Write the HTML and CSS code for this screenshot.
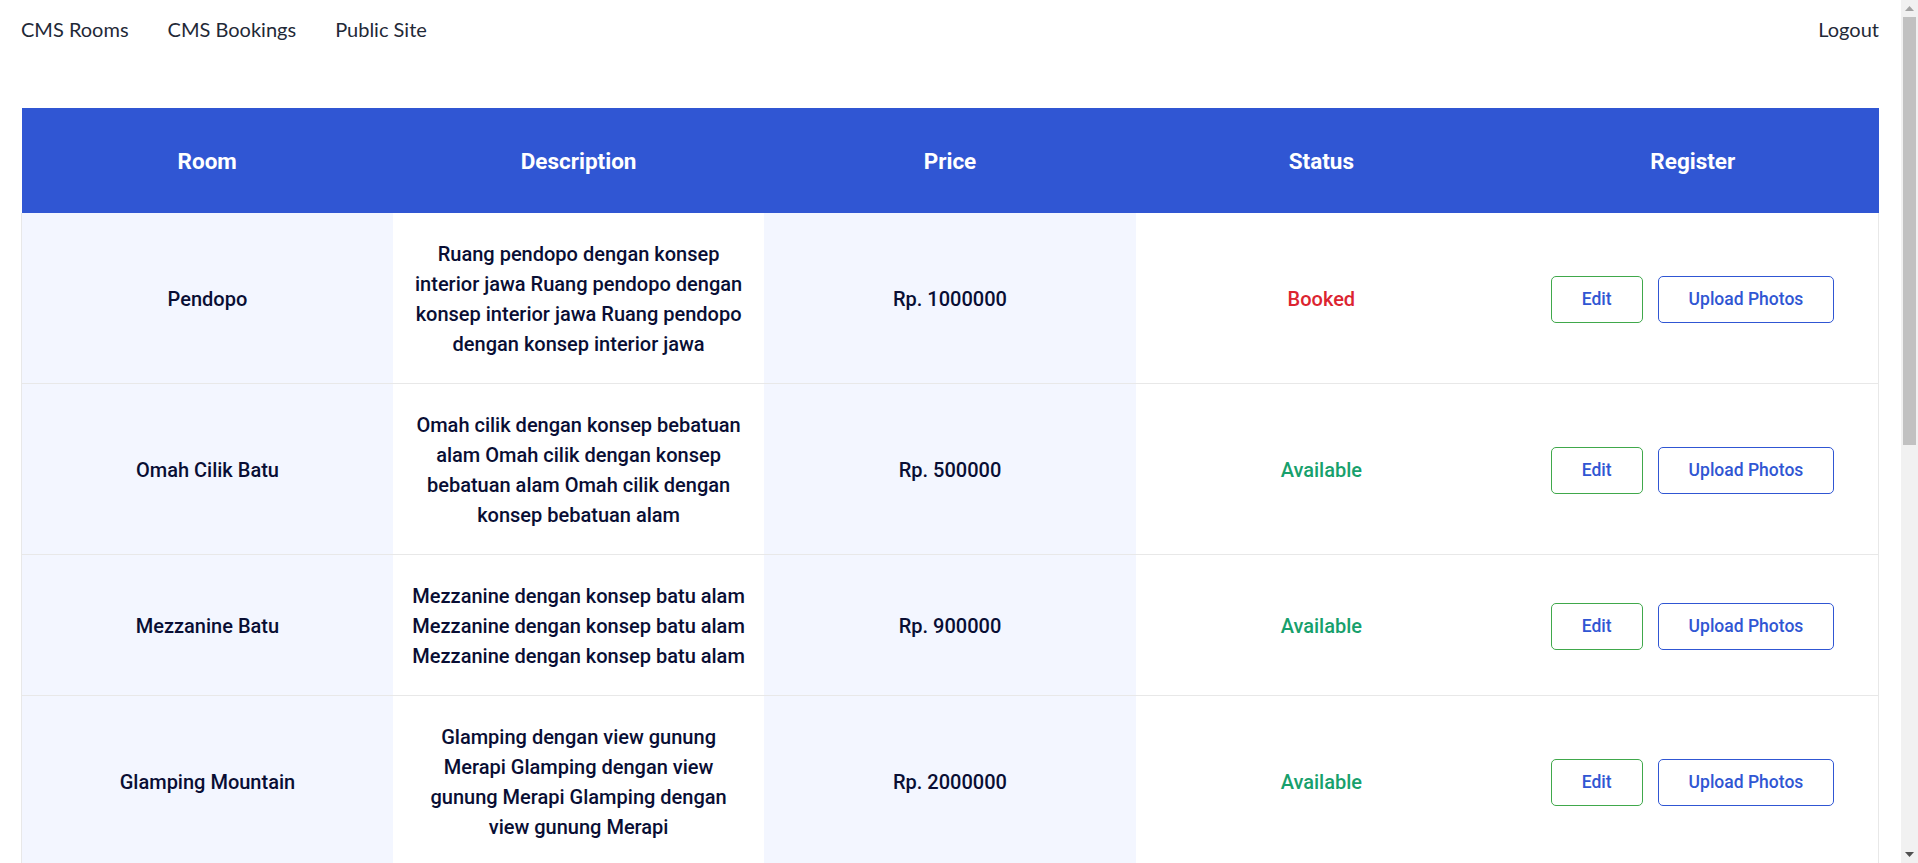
FILE: index.html
```html
<!DOCTYPE html>
<html lang="id">
<head>
<meta charset="utf-8">
<title>CMS Rooms</title>
<link rel="stylesheet" href="styles.css">
</head>
<body>
<nav class="topnav">
  <div class="nav-links">
    <a class="nav-link" href="#">CMS Rooms</a>
    <a class="nav-link" href="#">CMS Bookings</a>
    <a class="nav-link" href="#">Public Site</a>
  </div>
  <a class="nav-link" href="#">Logout</a>
</nav>
<main class="page">
  <table class="rooms">
    <colgroup><col><col><col><col><col></colgroup>
    <thead>
      <tr>
        <th>Room</th>
        <th>Description</th>
        <th>Price</th>
        <th>Status</th>
        <th>Register</th>
      </tr>
    </thead>
    <tbody>
      <tr>
        <td class="tint">Pendopo</td>
        <td>Ruang pendopo dengan konsep<br>interior jawa Ruang pendopo dengan<br>konsep interior jawa Ruang pendopo<br>dengan konsep interior jawa</td>
        <td class="tint">Rp. 1000000</td>
        <td><span class="status booked">Booked</span></td>
        <td class="last"><div class="actions"><a class="btn btn-edit" href="#">Edit</a><a class="btn btn-upload" href="#">Upload Photos</a></div></td>
      </tr>
      <tr>
        <td class="tint">Omah Cilik Batu</td>
        <td>Omah cilik dengan konsep bebatuan<br>alam Omah cilik dengan konsep<br>bebatuan alam Omah cilik dengan<br>konsep bebatuan alam</td>
        <td class="tint">Rp. 500000</td>
        <td><span class="status available">Available</span></td>
        <td class="last"><div class="actions"><a class="btn btn-edit" href="#">Edit</a><a class="btn btn-upload" href="#">Upload Photos</a></div></td>
      </tr>
      <tr>
        <td class="tint">Mezzanine Batu</td>
        <td>Mezzanine dengan konsep batu alam<br>Mezzanine dengan konsep batu alam<br>Mezzanine dengan konsep batu alam</td>
        <td class="tint">Rp. 900000</td>
        <td><span class="status available">Available</span></td>
        <td class="last"><div class="actions"><a class="btn btn-edit" href="#">Edit</a><a class="btn btn-upload" href="#">Upload Photos</a></div></td>
      </tr>
      <tr>
        <td class="tint">Glamping Mountain</td>
        <td>Glamping dengan view gunung<br>Merapi Glamping dengan view<br>gunung Merapi Glamping dengan<br>view gunung Merapi</td>
        <td class="tint">Rp. 2000000</td>
        <td><span class="status available">Available</span></td>
        <td class="last"><div class="actions"><a class="btn btn-edit" href="#">Edit</a><a class="btn btn-upload" href="#">Upload Photos</a></div></td>
      </tr>
    </tbody>
  </table>
</main>
<div class="scrollbar" aria-hidden="true">
  <div class="sb-btn">
    <svg width="9" height="5" viewBox="0 0 9 5"><polygon points="0,5 9,5 4.5,0" fill="#a3a3a3"/></svg>
  </div>
  <div class="sb-track"><div class="sb-thumb"></div></div>
  <div class="sb-btn">
    <svg width="9" height="5" viewBox="0 0 9 5"><polygon points="0,0 9,0 4.5,5" fill="#505050"/></svg>
  </div>
</div>
</body>
</html>
```
FILE: styles.css
```css
html {
  background: #ffffff;
}
body {
  margin: 0 17px 0 0;
  font-family: "Lato", "Liberation Sans", sans-serif;
  color: #090e34;
  background: #ffffff;
}

.topnav {
  display: flex;
  justify-content: space-between;
  align-items: center;
  height: 58px;
  padding: 0 22px 0 21px;
}
.nav-links {
  display: flex;
  gap: 39px;
}
.nav-link {
  font-size: 20px;
  line-height: 30px;
  color: #1f2937;
  text-decoration: none;
}

.page {
  padding: 50px 22px 0 21px;
}
.rooms {
  width: 100%;
  table-layout: fixed;
  border-collapse: collapse;
  font-family: "Roboto", "Lato", sans-serif;
}
.rooms col {
  width: 20%;
}
.rooms th {
  background: #3056d3;
  color: #ffffff;
  font-size: 22.5px;
  line-height: 35px;
  font-weight: 700;
  padding: 36px 15px 34px;
  text-align: center;
}
.rooms td {
  font-size: 20px;
  line-height: 30px;
  font-weight: 500;
  color: #090e34;
  text-align: center;
  padding: 26px 10px 24px;
  border-bottom: 1px solid #e8e8e8;
  white-space: nowrap;
}
.rooms td:first-child {
  border-left: 1px solid #e8e8e8;
}
.rooms td.last {
  border-right: 1px solid #e8e8e8;
}
.rooms td.tint {
  background: #f3f6ff;
}
.status.booked {
  color: #dc2430;
}
.status.available {
  color: #17a06c;
}
.actions {
  display: flex;
  justify-content: center;
  gap: 15px;
}
.btn {
  display: inline-block;
  font-size: 17.5px;
  line-height: 25px;
  font-weight: 500;
  color: #3056d3;
  text-decoration: none;
  padding: 10px 30px;
  border: 1px solid #3056d3;
  border-radius: 5px;
}
.btn-edit {
  border-color: #40a84b;
}

.scrollbar {
  position: fixed;
  top: 0;
  right: 0;
  width: 17px;
  height: 100vh;
  display: flex;
  flex-direction: column;
  background: #f1f1f1;
}
.sb-btn {
  height: 17px;
  display: flex;
  align-items: center;
  justify-content: center;
}
.sb-track {
  flex: 1;
  padding: 0 2px;
}
.sb-thumb {
  height: 428px;
  background: #c1c1c1;
}
```
